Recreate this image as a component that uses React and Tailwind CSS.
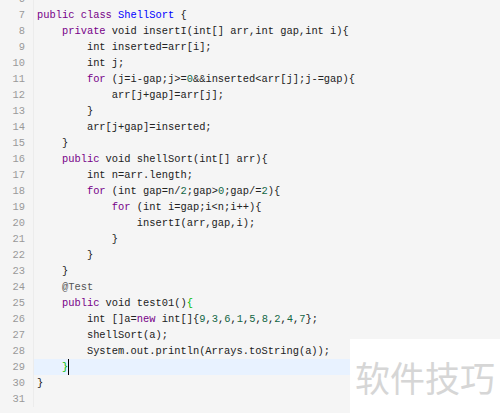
import React from "react";

const K = ({ children }) => <span className="text-[#770088]">{children}</span>;
const D = ({ children }) => <span className="text-[#0000ff]">{children}</span>;
const N = ({ children }) => <span className="text-[#116644]">{children}</span>;
const M = ({ children }) => <span className="text-[#555555]">{children}</span>;
const B = ({ children }) => <span className="text-[#00bb00]">{children}</span>;

const lines = [
  [6, <></>],
  [7, <><K>public</K> <K>class</K> <D>ShellSort</D> {"{"}</>],
  [8, <>{"    "}<K>private</K> void insertI(int[] arr,int gap,int i){"{"}</>],
  [9, <>{"        "}int inserted=arr[i];</>],
  [10, <>{"        "}int j;</>],
  [11, <>{"        "}<K>for</K> (j=i-gap;j&gt;=<N>0</N>&amp;&amp;inserted&lt;arr[j];j-=gap){"{"}</>],
  [12, <>{"            "}arr[j+gap]=arr[j];</>],
  [13, <>{"        "}{"}"}</>],
  [14, <>{"        "}arr[j+gap]=inserted;</>],
  [15, <>{"    "}{"}"}</>],
  [16, <>{"    "}<K>public</K> void shellSort(int[] arr){"{"}</>],
  [17, <>{"        "}int n=arr.length;</>],
  [18, <>{"        "}<K>for</K> (int gap=n/<N>2</N>;gap&gt;<N>0</N>;gap/=<N>2</N>){"{"}</>],
  [19, <>{"            "}<K>for</K> (int i=gap;i&lt;n;i++){"{"}</>],
  [20, <>{"                "}insertI(arr,gap,i);</>],
  [21, <>{"            "}{"}"}</>],
  [22, <>{"        "}{"}"}</>],
  [23, <>{"    "}{"}"}</>],
  [24, <>{"    "}<M>@Test</M></>],
  [25, <>{"    "}<K>public</K> void test01()<B>{"{"}</B></>],
  [26, <>{"        "}int []a=<K>new</K> int[]{"{"}<N>9</N>,<N>3</N>,<N>6</N>,<N>1</N>,<N>5</N>,<N>8</N>,<N>2</N>,<N>4</N>,<N>7</N>{"}"};</>],
  [27, <>{"        "}shellSort(a);</>],
  [28, <>{"        "}System.out.println(Arrays.toString(a));</>],
  [29, <>{"    "}<B>{"}"}</B><span className="inline-block w-[1px] h-[16px] bg-black align-top" /></>],
  [30, <>{"}"}</>],
  [31, <></>],
];

export default function App() {
  return (
    <div className="relative w-[500px] h-[413px] overflow-hidden bg-[#f5f5f5]" style={{ fontFamily: '"Liberation Mono", monospace' }}>
      <div className="flex flex-col mt-[-9px] text-[10.4px] leading-[16px] text-[#222]">
        {lines.map(([n, content]) => (
          <div key={n} className="flex h-[16px]">
            <div className="w-[34px] shrink-0 pr-[8px] text-right text-[#999] bg-[#f5f5f5] border-r border-[#ececec]">{n}</div>
            <div className={"flex-1 pl-[3px] whitespace-pre " + (n === 29 ? "bg-[#e8f2ff]" : "")}>{content}</div>
          </div>
        ))}
      </div>
      <div className="absolute left-[350px] top-[339px] w-[150px] h-[74px] bg-white flex items-center justify-center">
        <span className="text-[35px] leading-none text-[#d6d6d6] tracking-[0px]" style={{ fontFamily: '"Noto Sans CJK SC", sans-serif' }}>软件技巧</span>
      </div>
    </div>
  );
}
